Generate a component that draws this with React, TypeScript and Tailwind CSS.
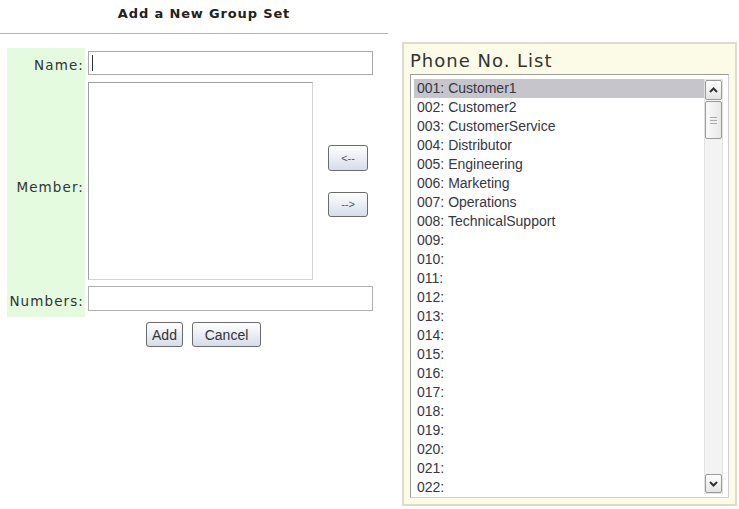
import React from 'react';

const PHONES = [
  '001: Customer1',
  '002: Customer2',
  '003: CustomerService',
  '004: Distributor',
  '005: Engineering',
  '006: Marketing',
  '007: Operations',
  '008: TechnicalSupport',
  ...Array.from({ length: 14 }, (_, i) => `${String(i + 9).padStart(3, '0')}:`),
];

const btn =
  'border border-[#6b6b6b] rounded-[3px] bg-gradient-to-b from-white to-[#d6dcea] text-[#333] font-["Liberation_Sans",Arial,sans-serif] leading-none flex items-center justify-center';

const label =
  'w-[78px] bg-[#e4fbe0] flex items-center justify-end pr-[1px] text-[13.5px] tracking-[1.1px] text-[#333] font-["DejaVu_Sans",Verdana,sans-serif]';

export default function App() {
  return (
    <div className="flex w-[739px] h-[509px] bg-white overflow-hidden">
      <div className="w-[388px] shrink-0 flex flex-col">
        <div className="h-[34px] border-b border-[#b4b4b4] flex items-center justify-center pl-[20px] pb-[5px]">
          <h2 className='text-[13px] font-bold tracking-[0.85px] text-[#222] font-["DejaVu_Sans",Verdana,sans-serif]'>
            Add a New Group Set
          </h2>
        </div>

        <div className="mt-[14px] ml-[7px] flex flex-col">
          <div className="flex">
            <div className={`${label} pt-[5px]`}>Name:</div>
            <div className="pl-[3px] pt-[3px] pb-[3px]">
              <div className="w-[285px] h-[24px] border border-[#a8a8a8] bg-white flex items-center pl-[3px]">
                <div className="w-px h-[16px] bg-[#333]" />
              </div>
            </div>
          </div>

          <div className="flex">
            <div className={`${label} pt-[14px]`}>Member:</div>
            <div className="pl-[3px] pt-[4px] pb-[3px] flex">
              <div className="w-[225px] h-[198px] border border-[#a0a0a0] border-r-[#d4d4d4] border-b-[#d4d4d4] bg-white" />
              <div className="ml-[15px] flex flex-col justify-center gap-[21px]">
                <button className={`${btn} w-[40px] h-[26px] text-[11px] text-[#555]`}>&lt;--</button>
                <button className={`${btn} w-[40px] h-[25px] text-[11px] text-[#555]`}>--&gt;</button>
              </div>
            </div>
          </div>

          <div className="flex">
            <div className={`${label} pt-[2px]`}>Numbers:</div>
            <div className="pl-[3px] pt-[3px] pb-[6px]">
              <div className="w-[285px] h-[25px] border border-[#b0b0b0] bg-white" />
            </div>
          </div>

          <div className="mt-[5px] pl-[139px] flex gap-[9px]">
            <button className={`${btn} w-[37px] h-[25px] text-[14px]`}>Add</button>
            <button className={`${btn} w-[69px] h-[25px] text-[14px]`}>Cancel</button>
          </div>
        </div>
      </div>

      <div className="ml-[14px] mt-[42px] w-[335px] h-[464px] border-2 border-[#dcdcc8] bg-[#fcfbe8] flex flex-col px-[6px] pb-[6px]">
        <div className='h-[31px] flex items-center pt-[2px] text-[18px] tracking-[1px] text-[#333] font-["DejaVu_Sans",Verdana,sans-serif]'>
          Phone No. List
        </div>
        <div className="flex-1 border border-[#9c9c9c] border-r-[#cfcfcf] border-b-[#cfcfcf] bg-white flex pt-[4px] pl-[3px] pr-[5px]">
          <ul className='flex-1 font-["Liberation_Sans",Arial,sans-serif] text-[14px] leading-[19px] text-[#363644]'>
            {PHONES.map((p, i) => (
              <li key={p} className={`h-[19px] pl-[3px] ${i === 0 ? 'bg-[#c5c5cb]' : ''}`}>
                {p}
              </li>
            ))}
          </ul>
          <div className="w-[19px] h-[415px] flex flex-col bg-[#f3f3f3] border border-[#e2e2e2]">
            <div className="h-[20px] border border-[#9a9a9a] rounded-[2px] bg-gradient-to-b from-white to-[#e4e4e4] flex items-center justify-center">
              <svg width="9" height="6" viewBox="0 0 9 6">
                <path d="M1 5 L4.5 1.5 L8 5" fill="none" stroke="#333" strokeWidth="2" />
              </svg>
            </div>
            <div className="h-[38px] mt-[1px] border border-[#9a9a9a] rounded-[2px] bg-gradient-to-r from-[#fafafa] to-[#e8e8e8] flex flex-col items-center justify-center gap-[2px]">
              <div className="w-[7px] h-px bg-[#aaa]" />
              <div className="w-[7px] h-px bg-[#aaa]" />
              <div className="w-[7px] h-px bg-[#aaa]" />
            </div>
            <div className="flex-1" />
            <div className="h-[19px] border border-[#9a9a9a] rounded-[2px] bg-gradient-to-b from-white to-[#e4e4e4] flex items-center justify-center">
              <svg width="9" height="6" viewBox="0 0 9 6">
                <path d="M1 1 L4.5 4.5 L8 1" fill="none" stroke="#333" strokeWidth="2" />
              </svg>
            </div>
          </div>
        </div>
      </div>
    </div>
  );
}
